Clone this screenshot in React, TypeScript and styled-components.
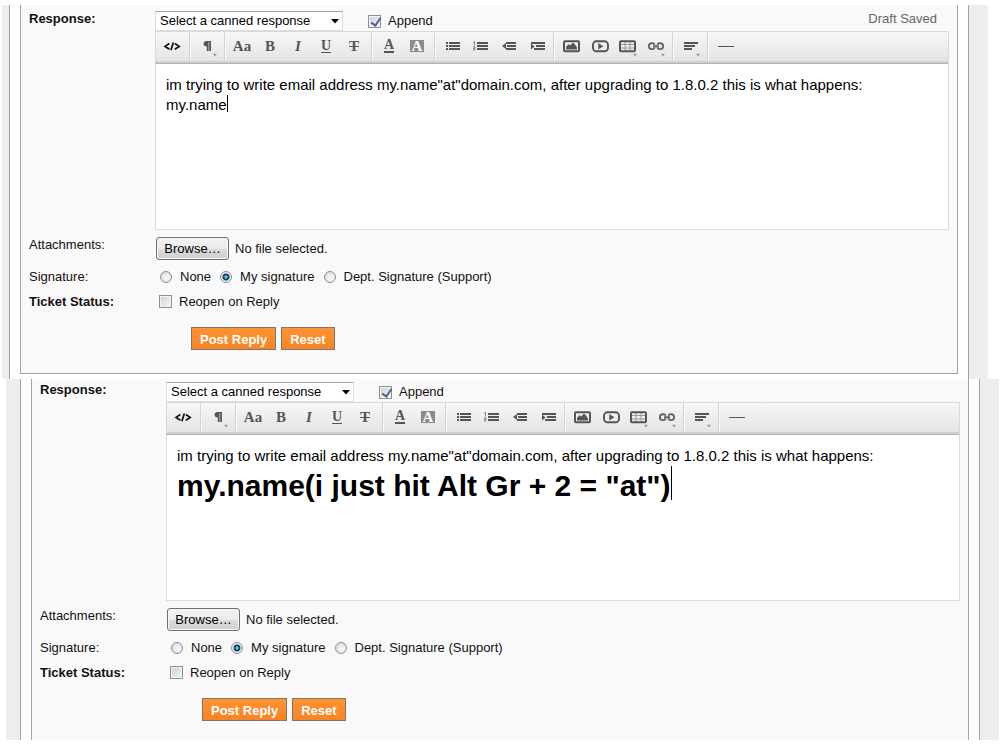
import React, { useId, useRef } from "react";
import styled, { createGlobalStyle, css } from "styled-components";

const GlobalStyle = createGlobalStyle`
  * { box-sizing: border-box; }
  body {
    margin: 0;
    background: #fff;
    color: #111;
    font: 13px/16px "Liberation Sans", Arial, sans-serif;
  }
  button, select, input { font: inherit; color: inherit; margin: 0; }
`;

const Page = styled.main`
  padding-top: 5px;
`;

const Frame = styled.section<{ $second?: boolean }>`
  display: flex;
  margin: ${(p) => (p.$second ? "0 1px 0 6px" : "0 12px 0 2px")};
`;

const Rail = styled.div<{ $width: number; $side: "left" | "right" }>`
  flex: none;
  width: ${(p) => p.$width}px;
  background: #ededed;
  ${(p) =>
    p.$side === "left"
      ? css`border-right: 1px solid #a3a3a3;`
      : css`border-left: 1px solid #a3a3a3;`}
`;

const Panel = styled.form<{ $second?: boolean }>`
  flex: 1;
  min-width: 0;
  margin: ${(p) => (p.$second ? "0 10px" : "0 10px 5px")};
  padding: ${(p) => (p.$second ? "3px 8px 19px" : "6px 8px 23px")};
  background: #f9f9f9;
  border: solid #a3a3a3;
  border-width: ${(p) => (p.$second ? "0 1px" : "0 1px 1px")};
`;

const Row = styled.div<{ $height?: number }>`
  display: grid;
  grid-template-columns: 126px minmax(0, 1fr);
  min-height: ${(p) => p.$height ?? 0}px;
  align-items: ${(p) => (p.$height ? "center" : "start")};
`;

const Caption = styled.div<{ $bold?: boolean; $drop?: boolean }>`
  font-weight: ${(p) => (p.$bold ? 700 : 400)};
  padding-top: ${(p) => (p.$drop ? 7 : 0)}px;
`;

const TopLine = styled.div`
  display: flex;
  align-items: center;
  height: 20px;
`;

const SelectBox = styled.div`
  display: grid;
  align-items: center;
  width: 188px;
  margin-right: 25px;
  > * { grid-area: 1 / 1; }
  > svg { justify-self: end; margin-right: 4px; pointer-events: none; }
`;

const Select = styled.select`
  appearance: none;
  width: 100%;
  height: 20px;
  padding: 0 20px 0 4px;
  color: #000;
  background: #fff;
  border: 1px solid #dcdcdc;
  border-top-color: #a5a5a5;
  border-radius: 0;
`;

const Draft = styled.span`
  margin: 0 12px 4px auto;
  color: #666;
`;

const Choice = styled.label<{ $radio?: boolean }>`
  display: inline-flex;
  align-items: center;
  gap: ${(p) => (p.$radio ? 8 : 7)}px;
`;

const Choices = styled.div<{ $radio?: boolean }>`
  display: flex;
  gap: 9px;
  padding-left: ${(p) => (p.$radio ? 5 : 4)}px;
`;

const Check = styled.input.attrs({ type: "checkbox" })`
  appearance: none;
  display: grid;
  flex: none;
  width: 13px;
  height: 13px;
  border: 1px solid #8e8f8f;
  background: linear-gradient(135deg, #cdd0d4, #f6f6f6);
  box-shadow: inset 0 0 0 1px #f4f4f4;
  &:checked::after {
    content: "";
    width: 4px;
    height: 8px;
    margin: 0 0 0 4px;
    border: solid #4a5f97;
    border-width: 0 2px 2px 0;
    transform: rotate(35deg);
  }
`;

const Radio = styled.input.attrs({ type: "radio" })`
  appearance: none;
  flex: none;
  width: 12px;
  height: 12px;
  border: 1px solid #8e8f8f;
  border-radius: 50%;
  background: radial-gradient(circle at 60% 60%, #f4f4f4 20%, #cfd1d3);
  &:checked {
    background: radial-gradient(circle at 50% 50%, #6cbbe0 0 1px, #17638f 2px, #0d3553 3px, #eceeef 4px);
  }
`;

const Toolbar = styled.div`
  display: flex;
  height: 33px;
  border: solid #d9d9d9;
  border-width: 1px 1px 0 0;
  background: linear-gradient(#f7f7f7, #e2e2e2);
  box-shadow: inset 0 -1px #b3b3b3, inset 0 -3px #d0d0d0, inset 1px 0 #d9d9d9;
`;

const Group = styled.div`
  display: flex;
  height: 29px;
  padding: 0 3px;
  border-right: 1px solid #d2d2d2;
  box-shadow: 1px 0 #fafafa;
  &:last-child { border: 0; box-shadow: none; }
`;

const Tool = styled.button.attrs({ type: "button" })`
  display: flex;
  justify-content: center;
  width: 28px;
  height: 29px;
  padding: 0;
  border: 0;
  background: none;
  color: #555;
  svg { display: block; flex: none; }
`;

const Glyph = styled.span<{ $kind?: "italic" | "under" | "strike" | "colour" | "fill" }>`
  align-self: flex-start;
  margin-top: 8px;
  font: 700 15px/13px "Liberation Serif", "Times New Roman", serif;
  ${(p) => p.$kind === "italic" && css`font-style: italic;`}
  ${(p) =>
    p.$kind === "under" &&
    css`height: 13px; line-height: 11px; font-size: 14px; border-bottom: 1px solid #555;`}
  ${(p) =>
    p.$kind === "strike" &&
    css`background: linear-gradient(#555, #555) 0 6px / 100% 1px no-repeat;`}
  ${(p) =>
    p.$kind === "colour" &&
    css`height: 13px; line-height: 10px; font-size: 14px; border-bottom: 2px solid #555;`}
  ${(p) =>
    p.$kind === "fill" &&
    css`width: 14px; height: 12px; line-height: 12px; text-align: center; background: #8b8b8b; color: #fff;`}
`;

const Editor = styled.div`
  min-height: 166px;
  padding: 11px 10px;
  background: #fff;
  border: 1px solid #dcdcdc;
  border-top: 0;
  color: #000;
  font-size: 15px;
  line-height: 20px;
  outline: none;
  p, h1 { margin: 0; }
  h1 { font-size: 30px; line-height: 40px; }
`;

const Cursor = styled.span<{ $height: number }>`
  display: inline-block;
  width: 1px;
  height: ${(p) => p.$height}px;
  vertical-align: top;
  background: #000;
`;

const FileLine = styled.div`
  display: flex;
  align-items: center;
  gap: 6px;
  padding: 7px 0 4px 1px;
`;

const HiddenFile = styled.input.attrs({ type: "file" })`
  display: none;
`;

const Browse = styled.button.attrs({ type: "button" })`
  width: 73px;
  height: 23px;
  padding: 0;
  border: 1px solid #707070;
  border-radius: 3px;
  background: linear-gradient(#f2f2f2, #ebebeb 50%, #dddddd 50%, #cfcfcf);
  box-shadow: inset 0 0 0 1px #f6f6f6;
  color: #000;
`;

const Actions = styled.div`
  display: flex;
  gap: 5px;
  margin: 13px 0 0 162px;
`;

const Orange = styled.button`
  height: 23px;
  padding: 2px 8px 0;
  border: 1px solid #777;
  background: linear-gradient(#ff9232, #f88424);
  color: #fff;
  font-weight: 700;
`;

const Icon = ({ children, menu }: { children: React.ReactNode; menu?: boolean }) => (
  <svg width="28" height="29" viewBox="0 0 28 29" fill="#555" aria-hidden="true">
    {children}
    {menu && <path d="M20 21.800h4l-2 2.700z" fill="#999" />}
  </svg>
);

const groups: [string, React.ReactNode][][] = [
  [["HTML", (
    <Icon>
      <path d="M11.400 11.500 7 14.400l4.400 2.900M16.800 11.500l4.400 2.900-4.400 2.900M15.300 10.600l-2.400 7.600" fill="none" stroke="#111" strokeWidth="1.700" />
    </Icon>
  )]],
  [["Formatting", (
    <Icon menu>
      <path d="M13.500 9H18v10h-1.800v-9h-.6v9h-1.800v-4.400c-2 0-3.200-1-3.200-2.800S11.800 9 13.500 9z" />
    </Icon>
  )]],
  [
    ["Font family", <Glyph>Aa</Glyph>],
    ["Bold", <Glyph>B</Glyph>],
    ["Italic", <Glyph $kind="italic">I</Glyph>],
    ["Underline", <Glyph $kind="under">U</Glyph>],
    ["Strikethrough", <Glyph $kind="strike">T</Glyph>],
  ],
  [
    ["Font colour", <Glyph $kind="colour">A</Glyph>],
    ["Back colour", <Glyph $kind="fill">A</Glyph>],
  ],
  [
    ["Unordered list", (
      <Icon><path d="M8 10h2v2H8zM8 13h2v2H8zM8 16h2v2H8zM11 10h11v2H11zM11 13h11v2H11zM11 16h11v2H11z" /></Icon>
    )],
    ["Ordered list", (
      <Icon>
        <path d="M11 10h11v2H11zM11 13h11v2H11zM11 16h11v2H11z" />
        <path d="M7 10.500 8.500 9.500v4M7 14.900h2v1.500H7.500v1.600H9.300" fill="none" stroke="#777" strokeWidth=".9" />
      </Icon>
    )],
    ["Outdent", (
      <Icon><path d="M12 10h10v2H12zM13 13h9v2h-9zM12 16h10v2H12zM12 11v6l-4-3z" /></Icon>
    )],
    ["Indent", (
      <Icon><path d="M9 10h14v2H9zM14 13h9v2h-9zM12 16h11v2H12zM9 11.500v6l3.500-3z" /></Icon>
    )],
  ],
  [
    ["Insert image", (
      <Icon>
        <rect x="7" y="9.300" width="15" height="10" rx="1" fill="none" stroke="#555" strokeWidth="2" />
        <path d="M9 17.500v-2.500l2.500-3 1.500 1.500 3-3 2 2 2 3v2z" />
      </Icon>
    )],
    ["Insert video", (
      <Icon>
        <rect x="8" y="9.300" width="15" height="10" rx="3.500" fill="none" stroke="#555" strokeWidth="1.900" />
        <path d="M13.300 11v6.600l5-3.300z" />
      </Icon>
    )],
    ["Table", (
      <Icon menu>
        <path d="M8 12.500h14M8 16h14M12 9v10M17 9v10" fill="none" stroke="#999" />
        <rect x="7" y="9.300" width="15" height="10" rx="1" fill="none" stroke="#555" strokeWidth="2" />
      </Icon>
    )],
    ["Link", (
      <Icon menu>
        <path d="M13.600 12.800c-.3-1-1-1.500-2-1.500h-.8a2.900 2.900 0 0 0 0 5.800h.8c1 0 1.700-.5 2-1.500M16.400 12.800c.3-1 1-1.500 2-1.500h.8a2.900 2.900 0 0 1 0 5.800h-.8c-1 0-1.700-.5-2-1.500M12 14.200h6" fill="none" stroke="#666" strokeWidth="1.900" />
      </Icon>
    )],
  ],
  [["Alignment", (
    <Icon menu><path d="M8 10h14v2H8zM8 13h11v2H8zM8 16h8v2H8z" /></Icon>
  )]],
  [["Horizontal rule", <Icon><path d="M7 14h16v1H7z" /></Icon>]],
];

function ReplyForm({ second, children }: { second?: boolean; children: React.ReactNode }) {
  const id = useId();
  const file = useRef<HTMLInputElement>(null);
  return (
    <Frame $second={second}>
      <Rail $width={second ? 15 : 8} $side="left" />
      <Panel $second={second} onSubmit={(e) => e.preventDefault()}>
        <Row>
          <Caption as="label" $bold htmlFor={`${id}canned`}>Response:</Caption>
          <div>
            <TopLine>
              <SelectBox>
                <Select id={`${id}canned`}>
                  <option>Select a canned response</option>
                </Select>
                <svg width="8" height="5" aria-hidden="true"><path d="M0 0h8L4 4.500z" /></svg>
              </SelectBox>
              <Choice><Check defaultChecked />Append</Choice>
              {!second && <Draft>Draft Saved</Draft>}
            </TopLine>
            <Toolbar role="toolbar" aria-label="Formatting">
              {groups.map((group, i) => (
                <Group key={i}>
                  {group.map(([name, art]) => (
                    <Tool key={name} aria-label={name}>{art}</Tool>
                  ))}
                </Group>
              ))}
            </Toolbar>
            <Editor
              contentEditable
              suppressContentEditableWarning
              role="textbox"
              aria-multiline="true"
              aria-label="Response"
              spellCheck={false}
            >
              {children}
            </Editor>
          </div>
        </Row>
        <Row>
          <Caption as="label" $drop htmlFor={`${id}file`}>Attachments:</Caption>
          <FileLine>
            <HiddenFile id={`${id}file`} ref={file} />
            <Browse onClick={() => file.current?.click()}>Browse…</Browse>
            <span>No file selected.</span>
          </FileLine>
        </Row>
        <Row $height={25} role="radiogroup" aria-labelledby={`${id}sig`}>
          <Caption id={`${id}sig`}>Signature:</Caption>
          <Choices $radio>
            <Choice $radio><Radio name={`${id}signature`} />None</Choice>
            <Choice $radio><Radio name={`${id}signature`} defaultChecked />My signature</Choice>
            <Choice $radio><Radio name={`${id}signature`} />Dept. Signature (Support)</Choice>
          </Choices>
        </Row>
        <Row $height={25}>
          <Caption $bold>Ticket Status:</Caption>
          <Choices>
            <Choice><Check />Reopen on Reply</Choice>
          </Choices>
        </Row>
        <Actions>
          <Orange type="submit">Post Reply</Orange>
          <Orange type="reset">Reset</Orange>
        </Actions>
      </Panel>
      <Rail $width={20} $side="right" />
    </Frame>
  );
}

const message =
  'im trying to write email address my.name"at"domain.com, after upgrading to 1.8.0.2 this is what happens:';

export default function App() {
  return (
    <>
      <GlobalStyle />
      <Page>
        <ReplyForm>
          <p>{message}</p>
          <p>my.name<Cursor $height={17} /></p>
        </ReplyForm>
        <ReplyForm second>
          <p>{message}</p>
          <h1>my.name(i just hit Alt Gr + 2 = "at")<Cursor $height={34} /></h1>
        </ReplyForm>
      </Page>
    </>
  );
}
